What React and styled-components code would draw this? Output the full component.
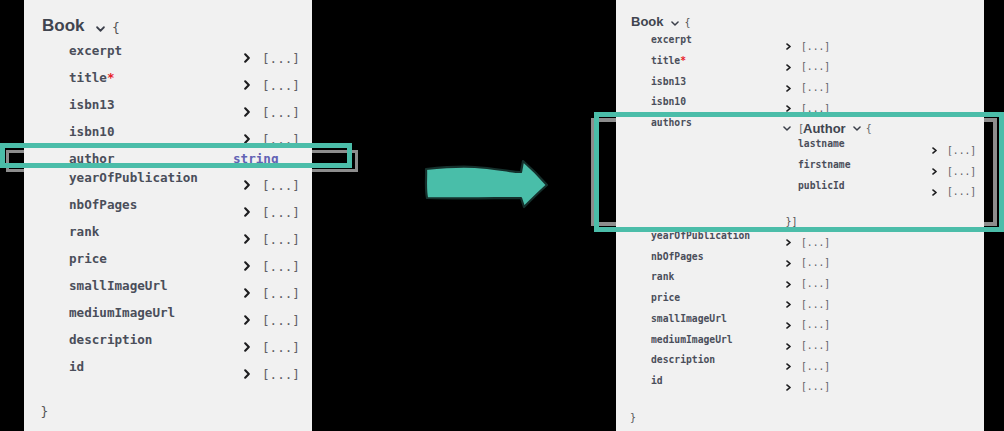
import React from 'react'
import styled, { createGlobalStyle } from 'styled-components'

const GlobalStyle = createGlobalStyle`
    html, body {
        margin: 0;
        padding: 0;
        background: #000;
    }
    body {
        width: 1004px;
        height: 431px;
        overflow: hidden;
    }
`

// two sizes of the same swagger model view
const big = {
    padTop: 16, padLeft: 18, titleSize: 17, titleLine: 20,
    chevW: 9, chevH: 6, chevGap: 11.5, chevTop: 10,
    braceSize: 13, braceGap: 7, braceTop: 2.4,
    indent: 27, propsTop: 4.6, mono: 12.6, line: 19, drop: 8,
    nameWidth: 164, toggleGap: 11, arrowW: 6, arrowH: 10, dotsGap: 12,
    closeTop: 18.5, closeLeft: -1.5,
}

const small = {
    padTop: 13.5, padLeft: 15, titleSize: 13, titleLine: 16,
    chevW: 8, chevH: 5, chevGap: 7.5, chevTop: 7.3,
    braceSize: 10, braceGap: 5.5, braceTop: 1,
    indent: 20, propsTop: 3.7, mono: 9.7, line: 14.2, drop: 6.5,
    nameWidth: 132, toggleGap: 3, arrowW: 5, arrowH: 7, dotsGap: 10,
    closeTop: 16, closeLeft: -1,
}

const leftProps = [
    'excerpt', 'title*', 'isbn13', 'isbn10', 'author:string', 'yearOfPublication',
    'nbOfPages', 'rank', 'price', 'smallImageUrl', 'mediumImageUrl', 'description', 'id',
]

const rightProps = [
    'excerpt', 'title*', 'isbn13', 'isbn10', 'authors:Author', 'yearOfPublication',
    'nbOfPages', 'rank', 'price', 'smallImageUrl', 'mediumImageUrl', 'description', 'id',
]

const authorProps = ['lastname', 'firstname', 'publicId']

const ChevronRight = ({ className }) => (
    <svg className={className} viewBox='0 0 6 10' preserveAspectRatio='none'>
        <path d='M1.2 1.3 L4.8 5 L1.2 8.7' fill='none' stroke='#1d1d1f' strokeWidth='2.1' strokeLinecap='round' strokeLinejoin='round' />
    </svg>
)

const ChevronDown = ({ className }) => (
    <svg className={className} viewBox='0 0 10 6' preserveAspectRatio='none'>
        <path d='M1.2 1.2 L5 4.8 L8.8 1.2' fill='none' stroke='#3b3f4a' strokeWidth='1.9' strokeLinecap='round' strokeLinejoin='round' />
    </svg>
)

const Arrow = () => (
    <ArrowSvg viewBox='0 0 128 52'>
        <path
            d='M1 11 C 20 9, 35 8, 50 9 C 70 10, 85 14, 96 14 L 98 3 C 106 10, 115 19, 122 27 C 114 34, 106 42, 99 49 L 96 40 C 70 40, 40 41, 2 40 C 0 30, 1.5 20, 1 11 Z'
            fill='#49bea9'
            stroke='#15302c'
            strokeWidth='2.2'
            strokeLinejoin='round'
        />
    </ArrowSvg>
)

const Collapsed = ({ s }) => (
    <CollapsedValue $s={s}>
        <Toggle $s={s} />
        <Dots $s={s}>[...]</Dots>
    </CollapsedValue>
)

const PropRow = ({ s, label, children }) => {
    const required = label.endsWith('*')
    const name = required ? label.slice(0, -1) : label
    return (
        <Row>
            <PropName $s={s}>
                {name}
                {required && <Star>*</Star>}
            </PropName>
            {children || <Collapsed s={s} />}
        </Row>
    )
}

const AuthorModel = ({ s }) => (
    <Expanded>
        <ExpandHead>
            <HeadChevron $w={8} $h={5} />
            <Bracket>[</Bracket>
            <NestedTitle>Author</NestedTitle>
            <HeadChevron $w={8} $h={5} $ml={7} />
            <Bracket $ml={5}>{'{'}</Bracket>
        </ExpandHead>
        <NestedProps>
            {authorProps.map(p => (
                <Row key={p}>
                    <PropName $s={s} $width={131}>{p}</PropName>
                    <Collapsed s={s} />
                </Row>
            ))}
        </NestedProps>
        <CloseNested $s={s}>{'}]'}</CloseNested>
    </Expanded>
)

const Model = ({ s, width, props }) => (
    <Panel $s={s} $width={width}>
        <ModelHead $s={s}>
            <ModelName $s={s}>Book</ModelName>
            <TitleChevron $s={s} />
            <Brace $s={s}>{'{'}</Brace>
        </ModelHead>
        <Properties $s={s}>
            {props.map(label => {
                const [name, type] = label.split(':')
                if (type === 'string') {
                    return (
                        <PropRow key={name} s={s} label={name}>
                            <TypeName $s={s}>string</TypeName>
                        </PropRow>
                    )
                }
                if (type === 'Author') {
                    return (
                        <PropRow key={name} s={s} label={name}>
                            <AuthorModel s={s} />
                        </PropRow>
                    )
                }
                return <PropRow key={name} s={s} label={name} />
            })}
        </Properties>
        <CloseBrace $s={s}>{'}'}</CloseBrace>
    </Panel>
)

const App = () => (
    <>
        <GlobalStyle />
        <Stage>
            <Model s={big} width={288} props={leftProps} />
            <ArrowSlot>
                <Arrow />
            </ArrowSlot>
            <Model s={small} width={368} props={rightProps} />

            <Frame $x={6} $y={150} $w={352} $h={22} $b={3.5} $c='#8d8d8d' $z={0} />
            <Frame $x={0} $y={143} $w={352} $h={25} $b={5} $c='#4bbda9' $z={2} />
            <Frame $x={591} $y={118} $w={406} $h={108} $b={4} $c='#8d8d8d' $z={0} />
            <Frame $x={594} $y={112} $w={410} $h={119.5} $b={5.5} $c='#4bbda9' $z={2} />
        </Stage>
    </>
)

const Stage = styled.div`
    position: relative;
    display: flex;
    align-items: flex-start;
    width: 1004px;
    height: 431px;
    overflow: hidden;
    padding-left: 24px;
    box-sizing: border-box;
`

const Panel = styled.section`
    position: relative;
    z-index: 1;
    flex-shrink: 0;
    box-sizing: border-box;
    width: ${p => p.$width}px;
    height: 431px;
    background: #f1f1f1;
    padding: ${p => p.$s.padTop}px 0 0 ${p => p.$s.padLeft}px;
`

const ArrowSlot = styled.div`
    display: flex;
    align-items: flex-start;
    flex-shrink: 0;
    box-sizing: border-box;
    width: 304px;
    padding: 158px 0 0 113px;
`

const ArrowSvg = styled.svg`
    width: 128px;
    height: 52px;
    overflow: visible;
`

const ModelHead = styled.div`
    display: flex;
    align-items: flex-start;
    height: ${p => p.$s.titleLine}px;
`

const ModelName = styled.span`
    font: bold ${p => p.$s.titleSize}px/${p => p.$s.titleLine}px 'Liberation Sans', Arial, sans-serif;
    color: #40444f;
`

const TitleChevron = styled(ChevronDown)`
    width: ${p => p.$s.chevW}px;
    height: ${p => p.$s.chevH}px;
    margin: ${p => p.$s.chevTop}px 0 0 ${p => p.$s.chevGap}px;
`

const Brace = styled.span`
    margin: ${p => p.$s.braceTop}px 0 0 ${p => p.$s.braceGap}px;
    font: ${p => p.$s.braceSize}px/${p => p.$s.titleLine}px 'DejaVu Sans Mono', monospace;
    color: #555;
`

const Properties = styled.div`
    display: flex;
    flex-direction: column;
    margin: ${p => p.$s.propsTop}px 0 0 ${p => p.$s.indent}px;
`

const Row = styled.div`
    display: flex;
    align-items: flex-start;
`

const PropName = styled.div`
    flex-shrink: 0;
    width: ${p => p.$width || p.$s.nameWidth}px;
    font: bold ${p => p.$s.mono}px/${p => p.$s.line}px 'DejaVu Sans Mono', monospace;
    color: #4a4e5a;
    white-space: nowrap;
`

const Star = styled.span`
    color: #e8202a;
`

const CollapsedValue = styled.div`
    display: flex;
    align-items: center;
    height: ${p => p.$s.line}px;
    margin-top: ${p => p.$s.drop}px;
    padding-left: ${p => p.$s.toggleGap}px;
`

const Toggle = styled(ChevronRight)`
    width: ${p => p.$s.arrowW}px;
    height: ${p => p.$s.arrowH}px;
`

const Dots = styled.span`
    margin-left: ${p => p.$s.dotsGap}px;
    font: ${p => p.$s.mono}px/${p => p.$s.line}px 'DejaVu Sans Mono', monospace;
    color: #5f6066;
`

const TypeName = styled.span`
    font: bold ${p => p.$s.mono}px/${p => p.$s.line}px 'DejaVu Sans Mono', monospace;
    color: #6262b4;
`

const Expanded = styled.div`
    display: flex;
    flex-direction: column;
`

const ExpandHead = styled.div`
    display: flex;
    align-items: center;
    height: 16px;
    margin-top: 4.8px;
`

const HeadChevron = styled(ChevronDown)`
    width: ${p => p.$w}px;
    height: ${p => p.$h}px;
    margin-left: ${p => p.$ml || 0}px;
`

const Bracket = styled.span`
    margin-left: ${p => p.$ml || 7}px;
    font: 10px/16px 'DejaVu Sans Mono', monospace;
    color: #666;
`

const NestedTitle = styled.span`
    margin-left: -1px;
    font: bold 13px/16px 'Liberation Sans', Arial, sans-serif;
    color: #40444f;
`

const NestedProps = styled.div`
    display: flex;
    flex-direction: column;
    margin: 0.6px 0 0 15px;
`

const CloseNested = styled.div`
    margin: 15.5px 0 0 2.5px;
    font: 10px/${p => p.$s.line}px 'DejaVu Sans Mono', monospace;
    color: #555;
`

const CloseBrace = styled.div`
    margin: ${p => p.$s.closeTop}px 0 0 ${p => p.$s.closeLeft}px;
    font: ${p => p.$s.braceSize}px/${p => p.$s.line}px 'DejaVu Sans Mono', monospace;
    color: #555;
`

const Frame = styled.div`
    position: absolute;
    box-sizing: border-box;
    left: ${p => p.$x}px;
    top: ${p => p.$y}px;
    width: ${p => p.$w}px;
    height: ${p => p.$h}px;
    border: ${p => p.$b}px solid ${p => p.$c};
    z-index: ${p => p.$z};
    pointer-events: none;
`

export default App
